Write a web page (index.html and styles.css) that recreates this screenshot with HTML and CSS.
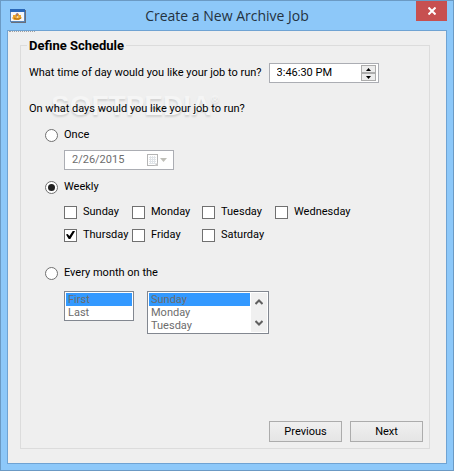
FILE: index.html
```html
<!DOCTYPE html>
<html lang="en">
    <head>
        <meta charset="UTF-8">
        <title>Create a New Archive Job</title>
        <link rel="stylesheet" href="styles.css">
    </head>
    <body>
        <div class="titleBar">
            <svg class="appIcon" width="16" height="14" viewBox="0 0 16 14">
                <rect x="1" y="1" width="15" height="13" fill="#6b6f78"/>
                <rect x="0" y="0" width="15" height="13" fill="#5b86b8"/>
                <rect x="0" y="0" width="15" height="3" fill="#2a68b8"/>
                <rect x="1" y="3" width="13" height="9" fill="#f4f7fb"/>
                <path d="M3 6l2 0 1-1 1 0 0-1 2 1 0 1 2 0 0 2 1 1-2 1-1 1-2 0-1 0-2 0-1-1-1-1 1-1z" fill="#eba42a"/>
                <path d="M4 9l2 1h3l2-1" stroke="#b06a10" fill="none"/>
                <path d="M7 4v4" stroke="#6a5aa0" fill="none"/>
                <circle cx="7.5" cy="8" r="1" fill="#fbe3a0"/>
            </svg>
            <h1>Create a New Archive Job</h1>
            <button type="button" class="closeBtn" aria-label="Close">
                <svg width="8" height="8" viewBox="0 0 8 8"><path d="M0.5 0.5l7 7M7.5 0.5l-7 7" stroke="#fff" stroke-width="2" fill="none"/></svg>
            </button>
        </div>

        <form class="client">
            <div class="focusMark"></div>
            <section class="group" aria-labelledby="groupTitle">
                <h2 id="groupTitle">Define Schedule</h2>

                <div class="timeRow">
                    <label for="time">What time of day would you like your job to run?</label>
                    <div class="picker">
                        <input type="text" id="time" value="3:46:30 PM">
                        <div class="spinner">
                            <button type="button" aria-label="Later"><svg width="5" height="3" viewBox="0 0 5 3"><path d="M0 3h5L2.5 0z"/></svg></button>
                            <button type="button" aria-label="Earlier"><svg width="5" height="3" viewBox="0 0 5 3"><path d="M0 0h5L2.5 3z"/></svg></button>
                        </div>
                    </div>
                </div>

                <div class="question">
                    On what days would you like your job to run?
                    <div class="watermark" aria-hidden="true">SOFTPEDIA<sup>®</sup></div>
                </div>

                <div class="choices">
                    <label class="option"><input type="radio" name="freq" id="once">Once</label>
                    <div class="picker disabled indent">
                        <input type="text" id="date" value="2/26/2015" aria-label="Date" disabled>
                        <svg width="22" height="14" viewBox="0 0 22 14">
                            <rect x="1.500" y="1.500" width="10" height="11" fill="#fff" stroke="#b5b5b5"/>
                            <path d="M3 4.500h7M3 6.500h7M3 8.500h7M3 10.500h7M4.500 3v8M6.500 3v8M8.500 3v8" stroke="#e0e4e8" fill="none"/>
                            <path d="M8 13l4-4v4z" fill="#c4c4c4"/>
                            <path d="M14 5h7l-3.500 4z" fill="#bfbfb8"/>
                        </svg>
                    </div>

                    <label class="option weekly"><input type="radio" name="freq" id="weekly" checked>Weekly</label>
                    <div class="days indent">
                        <label><input type="checkbox">Sunday</label>
                        <label><input type="checkbox">Monday</label>
                        <label><input type="checkbox">Tuesday</label>
                        <label><input type="checkbox">Wednesday</label>
                        <label><input type="checkbox" checked>Thursday</label>
                        <label><input type="checkbox">Friday</label>
                        <label><input type="checkbox">Saturday</label>
                    </div>

                    <label class="option monthly"><input type="radio" name="freq" id="monthly">Every month on the</label>
                    <div class="lists indent">
                        <div class="listBox">
                            <select size="2" aria-label="Week of the month" disabled>
                                <option selected>First</option>
                                <option>Last</option>
                            </select>
                        </div>
                        <div class="listBox wide">
                            <select size="3" aria-label="Day of the week" disabled>
                                <option selected>Sunday</option>
                                <option>Monday</option>
                                <option>Tuesday</option>
                            </select>
                            <div class="scroller">
                                <svg width="8" height="6" viewBox="0 0 8 6"><path d="M0.500 5L4 1.500 7.500 5" stroke="#606060" stroke-width="2" fill="none"/></svg>
                                <svg width="8" height="6" viewBox="0 0 8 6"><path d="M0.500 1L4 4.500 7.500 1" stroke="#606060" stroke-width="2" fill="none"/></svg>
                            </div>
                        </div>
                    </div>
                </div>

                <div class="buttons">
                    <button type="button">Previous</button>
                    <button type="button">Next</button>
                </div>
            </section>
        </form>
    </body>
</html>
```
FILE: styles.css
```css
* {
    box-sizing: border-box;
}

body {
    display: flex;
    flex-direction: column;
    margin: 0;
    padding: 0 6px 6px;
    min-height: 100vh;
    border: 1px solid #6b9ac4;
    background-color: #8dc8f9;
    color: #000;
    font: 11px/16px Roboto, "Liberation Sans", sans-serif;
}

input, select, button {
    margin: 0;
    padding: 0;
    color: inherit;
    font: inherit;
}

.titleBar {
    display: grid;
    grid-template-columns: 32px 1fr 32px;
    height: 29px;
}

.titleBar h1 {
    margin: 0;
    color: #24323f;
    font: 14px/30px "Open Sans", "Noto Sans", sans-serif;
    text-align: center;
    white-space: nowrap;
}

.appIcon {
    margin: 8px 0 0 3px;
}

.closeBtn {
    display: flex;
    align-items: center;
    justify-content: center;
    width: 31px;
    height: 20px;
    border: none;
    background-color: #c75050;
    justify-self: end;
}

.client {
    display: flex;
    flex: 1;
    flex-direction: column;
    padding: 0 16px 14px 12px;
    border: 1px solid #6fa3d3;
    background-color: #efefef;
}

.focusMark {
    width: 26px;
    height: 14px;
    margin-left: -11px;
    border-top: 1px dotted #a0a0a0;
}

.group {
    display: flex;
    flex: 1;
    flex-direction: column;
    padding: 0 6px 6px 8px;
    border: 1px solid #dcdcdc;
}

.group h2 {
    align-self: flex-start;
    margin: -8px 0 9px -2px;
    padding: 0 2px;
    background-color: #efefef;
    font-size: 13px;
    font-weight: bold;
}

.timeRow {
    display: flex;
    align-items: center;
    gap: 7px;
}

.picker {
    display: flex;
    align-items: center;
    width: 110px;
    height: 20px;
    border: 1px solid #abadb3;
    background-color: #fff;
}

.picker input {
    flex: 1;
    min-width: 0;
    padding-left: 7px;
    border: none;
    background: none;
}

.disabled {
    padding-right: 5px;
    color: #6d6d6d;
}

.spinner {
    display: flex;
    flex-direction: column;
    width: 15px;
    margin-right: 2px;
}

.spinner button {
    display: flex;
    align-items: center;
    justify-content: center;
    height: 8px;
    border: 1px solid #acacac;
    background-color: #ececec;
}

.question {
    position: relative;
    z-index: 0;
    margin-top: 18px;
}

.watermark {
    position: absolute;
    z-index: -1;
    top: -11px;
    left: 22px;
    color: #f5f5f5;
    font: bold 28px/32px "Liberation Sans", sans-serif;
    text-shadow: 0 2px 2px rgba(0, 0, 0, 0.12);
}

.watermark sup {
    font-size: 10px;
    line-height: 10px;
    vertical-align: 12px;
}

.choices {
    padding-left: 16px;
}

.indent {
    margin-left: 19px;
}

.option {
    display: flex;
    align-items: center;
    gap: 6px;
    margin: 10px 0 7px;
}

.weekly {
    margin: 9px 0;
}

.monthly {
    margin: 22px 0 10px;
}

input[type=radio], input[type=checkbox] {
    flex: none;
    width: 13px;
    height: 13px;
    border: 1px solid #707070;
    background-color: #fff;
    appearance: none;
}

input[type=radio] {
    border-radius: 50%;
}

input[type=radio]:checked::before {
    display: block;
    width: 7px;
    height: 7px;
    margin: 2px;
    border-radius: 50%;
    background-color: #212121;
    content: "";
}

input[type=checkbox]:checked::before {
    display: block;
    width: 9px;
    height: 9px;
    margin: 1px;
    background-color: #000;
    clip-path: polygon(0 45%, 18% 38%, 38% 62%, 78% 0, 100% 8%, 48% 95%, 30% 95%);
    content: "";
}

.days {
    display: grid;
    grid-template-columns: 68px 70px 73px 1fr;
    row-gap: 7px;
}

.days label {
    display: flex;
    align-items: center;
    gap: 6px;
}

.lists {
    display: flex;
    align-items: flex-start;
    gap: 13px;
}

.listBox {
    display: flex;
    width: 70px;
    padding: 1px;
    border: 1px solid #828790;
    background-color: #fff;
}

.wide {
    width: 122px;
}

.listBox select {
    flex: 1;
    min-width: 0;
    border: none;
    border-radius: 0;
    outline: none;
    background: none;
    color: #6d6d6d;
    opacity: 1;
    overflow: hidden;
}

.listBox option {
    min-height: 13px;
    padding: 0 2px;
    color: #6d6d6d;
    line-height: 13px;
}

.listBox option:checked {
    background: linear-gradient(#3399ff, #3399ff);
}

.scroller {
    display: flex;
    flex-direction: column;
    align-items: center;
    justify-content: space-between;
    width: 17px;
    padding: 6px 0;
    border-left: 1px solid #fff;
    background-color: #f0f0f0;
}

.buttons {
    display: flex;
    justify-content: flex-end;
    gap: 8px;
    margin-top: auto;
}

.buttons button {
    width: 73px;
    height: 21px;
    border: 1px solid #acacac;
    background: linear-gradient(#f0f0f0, #e5e5e5);
}
```
